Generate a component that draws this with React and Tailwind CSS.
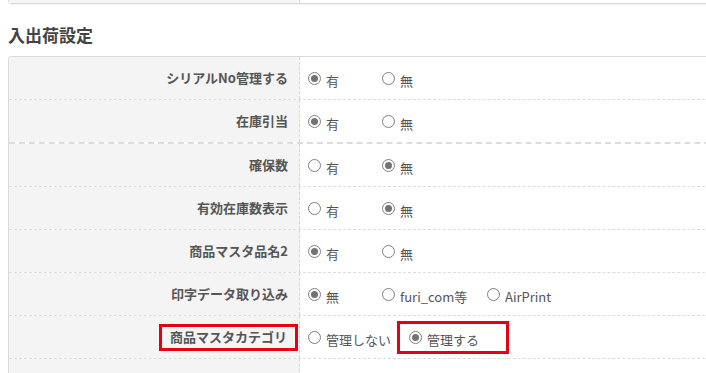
const font = { fontFamily: '"Noto Sans CJK JP", "Noto Sans", sans-serif' };

function Radio({ checked, label, className = "" }) {
    return (
        <span className={`flex items-center shrink-0 ${className}`}>
            <span className="w-[13px] h-[13px] rounded-full border border-[#808080] bg-white flex items-center justify-center shrink-0">
                {checked && <span className="w-[7px] h-[7px] rounded-full bg-[#737373]" />}
            </span>
            <span className="ml-[5px] mt-[5px] text-[13px] leading-none text-[#555]">{label}</span>
        </span>
    );
}

function Row({ label, children, height = "h-[43px]", border = "border-b border-dashed border-[#dcdcdc]", boxed = false }) {
    return (
        <div className={`flex ${height} ${border}`}>
            <div className="w-[291px] shrink-0 bg-[#f4f4f4] border-r border-dashed border-[#d6d6d6] flex items-center justify-end pr-[11px]">
                {boxed ? (
                    <span className="border-[3px] border-[#e60012] h-[27px] px-[8px] mr-[-10px] flex items-center text-[13px] font-bold text-[#555]">
                        {label}
                    </span>
                ) : (
                    <span className="text-[13px] font-bold text-[#555]">{label}</span>
                )}
            </div>
            <div className="flex items-center pl-[8px]">{children}</div>
        </div>
    );
}

export default function App() {
    return (
        <div className="w-[706px] h-[373px] overflow-hidden bg-white" style={font}>
            <div className="pl-2 w-[760px]">
                {/* previous section box */}
                <div className="flex h-[4px] border-l border-b border-[#dadada] rounded-bl-[4px] shadow-[0_1px_1px_rgba(0,0,0,0.05)]">
                    <div className="w-[291px] bg-[#f6f6f6] border-r border-[#dadada]" />
                    <div className="flex-1" />
                </div>

                <div className="h-[52px] pt-[8px] flex items-center">
                    <h2 className="text-[17px] font-bold text-[#444] leading-none">入出荷設定</h2>
                </div>

                <div className="border-l border-t border-[#dadada] rounded-tl-[4px] overflow-hidden">
                    <Row label="シリアルNo管理する">
                        <Radio checked label="有" className="w-[74px]" />
                        <Radio label="無" />
                    </Row>
                    <Row label="在庫引当" height="h-[44px]" border="border-b-2 border-dashed border-[#dcdcdc]">
                        <Radio checked label="有" className="w-[74px]" />
                        <Radio label="無" />
                    </Row>
                    <Row label="確保数">
                        <Radio label="有" className="w-[74px]" />
                        <Radio checked label="無" />
                    </Row>
                    <Row label="有効在庫数表示">
                        <Radio label="有" className="w-[74px]" />
                        <Radio checked label="無" />
                    </Row>
                    <Row label="商品マスタ品名2">
                        <Radio checked label="有" className="w-[74px]" />
                        <Radio label="無" />
                    </Row>
                    <Row label="印字データ取り込み">
                        <Radio checked label="無" className="w-[74px]" />
                        <Radio label="furi_com等" className="w-[105px]" />
                        <Radio label="AirPrint" />
                    </Row>
                    <Row label="商品マスタカテゴリ" boxed>
                        <Radio label="管理しない" className="w-[89px]" />
                        <div className="border-[3px] border-[#e60012] w-[112px] h-[33px] flex items-center pl-[9px]">
                            <Radio checked label="管理する" />
                        </div>
                    </Row>
                    <Row label="">
                        <span />
                    </Row>
                </div>
            </div>
        </div>
    );
}
